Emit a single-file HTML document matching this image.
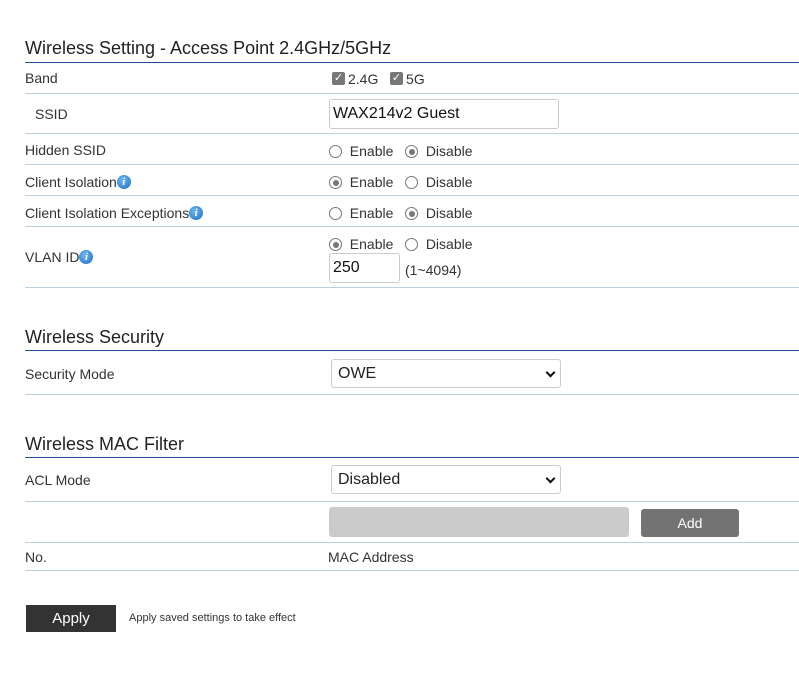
<!DOCTYPE html><html><head><style>
body{margin:0;width:799px;height:697px;background:#fff;font-family:"Liberation Sans",sans-serif;color:#333;position:relative;overflow:hidden}
.a{position:absolute}
.t{font-size:18px;color:#222}
.l{font-size:14px;color:#333;line-height:16px}
.hr{position:absolute;left:25px;right:0;height:1px;background:#b7d0e2}
.hb{position:absolute;left:25px;right:0;height:1px;background:#1f4b94}
.r{display:inline-block;width:13px;height:13px;border:1px solid #777;border-radius:50%;vertical-align:-2px;box-sizing:border-box;position:relative;background:#fff}
.r.on::after{content:"";position:absolute;left:2.5px;top:2.5px;width:6px;height:6px;border-radius:50%;background:#777}
.cb{display:inline-block;width:13px;height:13px;background:#777;border-radius:2px;color:#fff;font-size:11px;line-height:13px;text-align:center;vertical-align:top;margin-top:1px;margin-right:3px}
.i{display:inline-block;width:14px;height:14px;border-radius:50%;background:radial-gradient(circle at 40% 35%,#6fb6ef,#1b6fc4);color:#fff;font:italic bold 11px/14px "Liberation Serif",serif;text-align:center;vertical-align:2px}
.box{position:absolute;border:1px solid #ccc;border-radius:3px;background:#fff;box-sizing:border-box}
.sel{font-size:16px;color:#222;padding-left:6px;line-height:28px}
.chev{position:absolute;right:6px;top:9px;width:5px;height:5px;border-right:2px solid #111;border-bottom:2px solid #111;transform:rotate(45deg)}
</style></head><body>
<div class="a t" style="left:25px;top:38px">Wireless Setting - Access Point 2.4GHz/5GHz</div>
<div class="hb" style="top:62px"></div>
<div class="a l" style="left:25px;top:70px">Band</div>
<div class="a l" style="left:332px;top:71px"><span class="cb">✓</span>2.4G &nbsp;&nbsp;<span class="cb">✓</span>5G</div>
<div class="hr" style="top:93px"></div>
<div class="a l" style="left:35px;top:106px">SSID</div>
<div class="box" style="left:329px;top:99px;width:230px;height:30px;font-size:16px;color:#111;padding:5px 3px">WAX214v2 Guest</div>
<div class="hr" style="top:133px"></div>
<div class="a l" style="left:25px;top:142px">Hidden SSID</div>
<div class="a l" style="left:329px;top:143px"><span class="r"></span>&nbsp; Enable &nbsp;&nbsp;<span class="r on"></span>&nbsp; Disable</div>
<div class="hr" style="top:164px"></div>
<div class="a l" style="left:25px;top:174px">Client Isolation<span class="i">i</span></div>
<div class="a l" style="left:329px;top:174px"><span class="r on"></span>&nbsp; Enable &nbsp;&nbsp;<span class="r"></span>&nbsp; Disable</div>
<div class="hr" style="top:195px"></div>
<div class="a l" style="left:25px;top:205px">Client Isolation Exceptions<span class="i">i</span></div>
<div class="a l" style="left:329px;top:205px"><span class="r"></span>&nbsp; Enable &nbsp;&nbsp;<span class="r on"></span>&nbsp; Disable</div>
<div class="hr" style="top:226px"></div>
<div class="a l" style="left:25px;top:249px">VLAN ID<span class="i">i</span></div>
<div class="a l" style="left:329px;top:236px"><span class="r on"></span>&nbsp; Enable &nbsp;&nbsp;<span class="r"></span>&nbsp; Disable</div>
<div class="box" style="left:329px;top:253px;width:71px;height:30px;font-size:16px;color:#111;padding:5px 3px">250</div>
<div class="a l" style="left:405px;top:262px">(1~4094)</div>
<div class="hr" style="top:287px"></div>
<div class="a t" style="left:25px;top:327px">Wireless Security</div>
<div class="hb" style="top:350px"></div>
<div class="a l" style="left:25px;top:366px">Security Mode</div>
<div class="box sel" style="left:331px;top:359px;width:230px;height:29px">OWE<span class="chev"></span></div>
<div class="hr" style="top:394px"></div>
<div class="a t" style="left:25px;top:434px">Wireless MAC Filter</div>
<div class="hb" style="top:457px"></div>
<div class="a l" style="left:25px;top:472px">ACL Mode</div>
<div class="box sel" style="left:331px;top:465px;width:230px;height:29px">Disabled<span class="chev"></span></div>
<div class="hr" style="top:501px"></div>
<div class="a" style="left:329px;top:507px;width:300px;height:30px;background:#cbcbcb;border-radius:3px"></div>
<div class="a" style="left:641px;top:509px;width:98px;height:28px;background:#737373;border-radius:3px;color:#fff;font-size:14px;text-align:center;line-height:28px">Add</div>
<div class="hr" style="top:542px"></div>
<div class="a l" style="left:25px;top:549px">No.</div>
<div class="a l" style="left:328px;top:549px">MAC Address</div>
<div class="hr" style="top:570px"></div>
<div class="a" style="left:26px;top:605px;width:90px;height:27px;background:#333;color:#fff;font-size:15px;text-align:center;line-height:27px">Apply</div>
<div class="a" style="left:129px;top:612px;font-size:11px;color:#333">Apply saved settings to take effect</div>
</body></html>
